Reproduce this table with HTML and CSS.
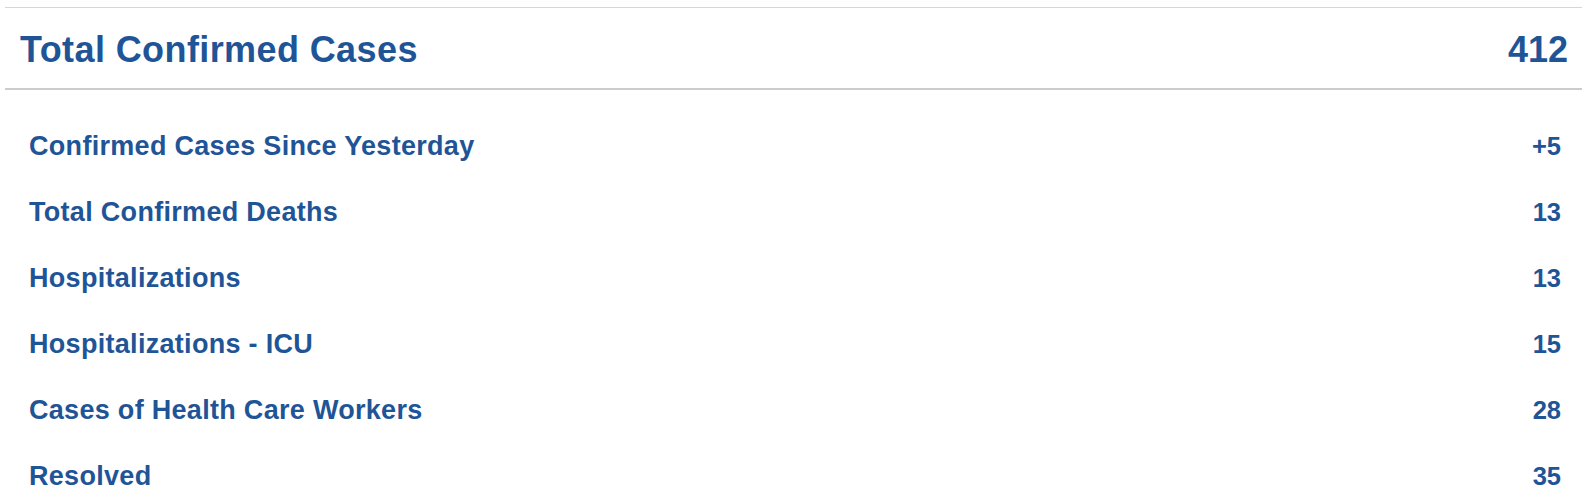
FILE: index.html
```html
<!DOCTYPE html>
<html lang="en">
<head>
<meta charset="utf-8">
<title>Total Confirmed Cases</title>
<link rel="stylesheet" href="styles.css">
</head>
<body>
<section class="panel">
  <header class="header">
    <h1 class="title">Total Confirmed Cases</h1>
    <span class="total">412</span>
  </header>
  <ul class="rows">
    <li class="row"><span class="label">Confirmed Cases Since Yesterday</span><span class="value">+5</span></li>
    <li class="row"><span class="label">Total Confirmed Deaths</span><span class="value">13</span></li>
    <li class="row"><span class="label">Hospitalizations</span><span class="value">13</span></li>
    <li class="row"><span class="label">Hospitalizations - ICU</span><span class="value">15</span></li>
    <li class="row"><span class="label">Cases of Health Care Workers</span><span class="value">28</span></li>
    <li class="row"><span class="label">Resolved</span><span class="value">35</span></li>
  </ul>
</section>
</body>
</html>
```

FILE: styles.css
```css
html, body {
  margin: 0;
  padding: 0;
  background: #ffffff;
}

body {
  font-family: "Liberation Sans", Arial, Helvetica, sans-serif;
  color: #1f5597;
}

.panel {
  margin: 7px 6px 0 5px;
  border-top: 1px solid #d6d6d6;
}

.header {
  display: flex;
  justify-content: space-between;
  align-items: flex-start;
  padding: 4px 14px 0 15px;
  height: 76px;
  border-bottom: 2px solid #cccccc;
}

.title {
  margin: 0;
  font-size: 36px;
  letter-spacing: 0.4px;
  font-weight: bold;
  line-height: 76px;
}

.total {
  font-size: 36px;
  font-weight: bold;
  line-height: 76px;
}

.rows {
  list-style: none;
  margin: 0;
  padding: 23px 21px 0 24px;
}

.row {
  display: flex;
  justify-content: space-between;
  align-items: baseline;
  height: 66px;
  line-height: 66px;
  font-weight: bold;
}

.label {
  font-size: 27px;
  letter-spacing: 0.3px;
}

.value {
  font-size: 25.5px;
}
```
